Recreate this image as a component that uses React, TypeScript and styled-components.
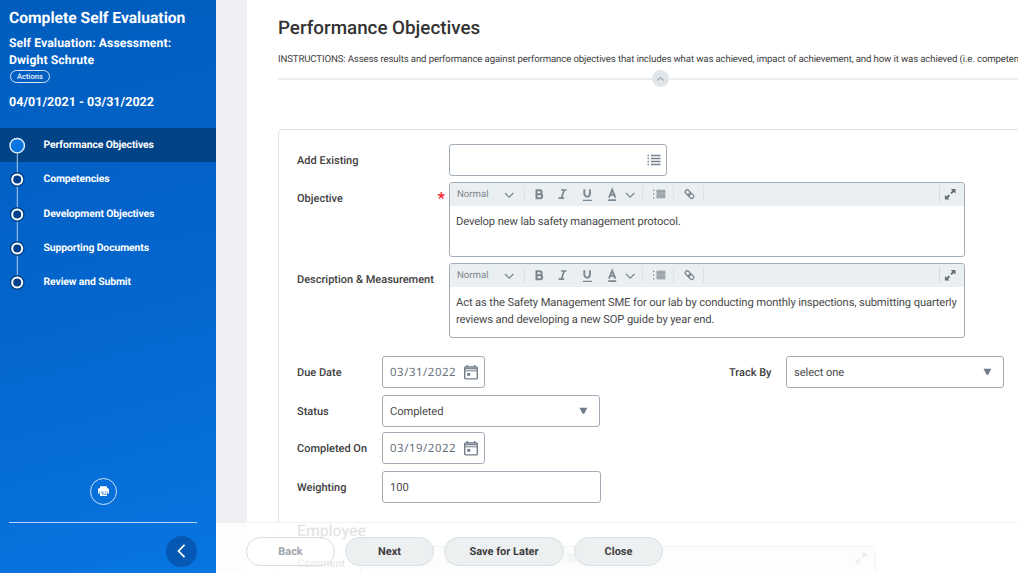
import React from 'react';
import styled, { createGlobalStyle } from 'styled-components';

const GlobalStyle = createGlobalStyle`
  * { box-sizing: border-box; }
  body {
    margin: 0;
    overflow: hidden;
    background: #fff;
    font-family: Roboto, "Liberation Sans", sans-serif;
    color: #4a4a4a;
    text-rendering: geometricPrecision;
  }
  button { font-family: inherit; cursor: pointer; text-rendering: inherit; }
  h1, h2, p { margin: 0; }
`;

const Page = styled.div`
  display: flex;
  width: 1018px;
  height: 573px;
  overflow: hidden;
`;

const Sidebar = styled.aside`
  display: flex;
  flex-direction: column;
  flex: none;
  width: 215.5px;
  height: 573px;
  color: #fff;
  background: linear-gradient(165deg, #005dbd 0%, #0364cb 45%, #0875e1 100%);
`;

const SidebarHead = styled.header`
  height: 128px;
  padding: 8px 0 0 9px;
`;

const SideTitle = styled.h1`
  font-size: 15.65px;
  line-height: 19px;
  font-weight: 700;
  white-space: nowrap;
`;

const SideSubtitle = styled.p`
  margin-top: 8px;
  font-size: 12.2px;
  line-height: 17px;
  font-weight: 700;
  letter-spacing: 0.1px;
`;

const ActionsButton = styled.button`
  display: flex;
  align-items: center;
  justify-content: center;
  width: 40px;
  height: 13px;
  margin: 1px 0 0 1px;
  padding: 0;
  border: 1px solid #d5e5f7;
  border-radius: 7px;
  background: transparent;
  color: #e4eefa;
  font-size: 7.6px;
  line-height: 10px;
  font-weight: 500;
`;

const DateRange = styled.p`
  margin-top: 11px;
  font-size: 12.55px;
  line-height: 18px;
  font-weight: 700;
`;

const Steps = styled.nav`
  display: flex;
  flex-direction: column;
  flex: 1;
`;

const Step = styled.div<{ $active?: boolean }>`
  display: flex;
  align-items: flex-start;
  height: 34.3px;
  padding-left: 7px;
  background: ${(p) => (p.$active ? '#004387' : 'transparent')};
`;

const StepMark = styled.svg`
  flex: none;
  display: block;
  overflow: visible;
`;

const StepLabel = styled.span`
  margin: 9px 0 0 16.5px;
  font-size: 10.4px;
  line-height: 15px;
  font-weight: 700;
  letter-spacing: -0.11px;
  white-space: nowrap;
`;

const SidebarFoot = styled.footer`
  display: flex;
  flex-direction: column;
  align-items: center;
  height: 96px;
  padding-left: 9px;
  padding-right: 18.5px;
`;

const PrintButton = styled.button`
  display: flex;
  align-items: center;
  justify-content: center;
  width: 27px;
  height: 27px;
  margin-top: 0.5px;
  padding: 0;
  border: 1px solid #cfe2f8;
  border-radius: 50%;
  background: transparent;
`;

const FootRule = styled.div`
  width: 100%;
  height: 1px;
  margin-top: 17.5px;
  background: #b4d3f5;
`;

const CollapseButton = styled.button`
  display: flex;
  align-items: center;
  justify-content: center;
  align-self: flex-end;
  flex: none;
  width: 31px;
  height: 31px;
  margin-top: 12.5px;
  padding: 0;
  border: 0;
  border-radius: 50%;
  background: #0559b5;
`;

const Gutter = styled.div`
  flex: none;
  width: 31.5px;
  background: #eeeff2;
`;

const Main = styled.main`
  flex: 1;
  min-width: 0;
  padding-left: 31px;
  background: #fff;
`;

const PageTitle = styled.h2`
  padding-top: 16px;
  font-size: 18.8px;
  line-height: 24px;
  font-weight: 500;
  color: #333;
  white-space: nowrap;
`;

const Instructions = styled.p`
  margin-top: 12px;
  font-size: 9.65px;
  line-height: 15px;
  letter-spacing: -0.13px;
  color: #404040;
  white-space: nowrap;
`;

const Divider = styled.div`
  display: flex;
  align-items: center;
  height: 17px;
  margin-top: 3px;
`;

const DividerLine = styled.div<{ $width?: number }>`
  flex: ${(p) => (p.$width ? 'none' : '1')};
  width: ${(p) => (p.$width ? `${p.$width}px` : 'auto')};
  height: 2px;
  background: #ebeff2;
`;

const FoldButton = styled.button`
  display: flex;
  align-items: center;
  justify-content: center;
  width: 17px;
  height: 17px;
  padding: 0;
  border: 0;
  border-radius: 50%;
  background: #dfe5e8;
`;

const Card = styled.section`
  width: 760px;
  height: 470px;
  margin-top: 42px;
  padding: 14px 0 0 18px;
  border: 1px solid #dfe3e9;
  border-radius: 4px;
`;

const Row = styled.div<{ $gap?: number }>`
  display: flex;
  align-items: flex-start;
  margin-bottom: ${(p) => p.$gap ?? 6}px;
`;

const Label = styled.label<{ $width: number }>`
  flex: none;
  width: ${(p) => p.$width}px;
  padding-top: 9px;
  font-size: 11px;
  line-height: 15px;
  font-weight: 500;
  color: #404040;
  white-space: nowrap;
`;

const TrackLabel = styled(Label)`
  margin-left: 244px;
`;

const Required = styled.span`
  flex: none;
  width: 12px;
  padding-top: 6px;
  margin-left: -11.5px;
  margin-right: -0.5px;
  font-size: 17px;
  line-height: 22px;
  font-weight: 500;
  color: #f5222d;
`;

const Field = styled.div<{ $width: number }>`
  display: flex;
  align-items: center;
  justify-content: space-between;
  flex: none;
  width: ${(p) => p.$width}px;
  height: 32px;
  padding: 0 5px 0 7px;
  border: 1px solid #a3adb8;
  border-radius: 3px;
  background: #fff;
  font-size: 11.2px;
  line-height: 16px;
  letter-spacing: -0.1px;
  color: #4a4a4a;
`;

const FieldText = styled.span`
  padding-top: 2px;
`;

const DateText = styled(FieldText)`
  font-family: "Noto Sans", sans-serif;
  font-size: 11.4px;
  letter-spacing: 0.55px;
  color: #67717c;
`;

const Caret = styled.svg`
  display: block;
  margin-right: 6px;
`;

const Editor = styled.div<{ $height?: number }>`
  flex: none;
  width: 515.5px;
  height: ${(p) => p.$height ?? 75}px;
  border: 1px solid #a3adb8;
  border-radius: 3px;
  overflow: hidden;
  background: #fff;
`;

const Toolbar = styled.div`
  display: flex;
  align-items: center;
  height: 23px;
  background: #eaeff2;
  color: #7e868d;
`;

const FormatName = styled.span`
  width: 48px;
  margin-left: 7px;
  font-size: 9.6px;
  line-height: 14px;
  color: #7d8388;
`;

const ToolIcons = styled.svg`
  display: block;
  flex: none;
  margin-left: -0.9px;
`;

const ExpandIcon = styled.svg`
  display: block;
  margin-left: auto;
`;

const EditorText = styled.p`
  padding: 7px 0 0 6px;
  font-size: 11.2px;
  line-height: 17.2px;
  letter-spacing: -0.125px;
  color: #4a4a4a;
  white-space: pre;
`;

const SectionTitle = styled.h2`
  margin-top: 18px;
  font-size: 15.8px;
  line-height: 20px;
  font-weight: 500;
  color: #333;
`;

const CommentRow = styled(Row)`
  margin-top: 5px;
`;

const CommentLabel = styled(Label)`
  padding-top: 10px;
`;

const FooterBar = styled.footer`
  position: absolute;
  left: 216px;
  top: 522px;
  display: flex;
  gap: 10px;
  width: 802px;
  height: 51px;
  padding: 14px 0 0 30px;
  border-top: 1px solid #f2f2f3;
  background: rgba(255, 255, 255, 0.87);
`;

const PillButton = styled.button<{ $width?: number; $ghost?: boolean }>`
  width: ${(p) => p.$width ?? 89}px;
  height: 29px;
  padding: 0;
  border: 1px solid ${(p) => (p.$ghost ? '#d9dde2' : '#dae0e5')};
  border-radius: 15px;
  background: ${(p) => (p.$ghost ? 'rgba(255,255,255,0.3)' : '#ecf0f1')};
  font-size: 11px;
  font-weight: 700;
  color: ${(p) => (p.$ghost ? '#a0a5aa' : '#3c3c3c')};
`;

const steps = [
  'Performance Objectives',
  'Competencies',
  'Development Objectives',
  'Supporting Documents',
  'Review and Submit',
];

function StepDot({ index }: { index: number }) {
  const last = index === steps.length - 1;
  return (
    <StepMark width="20" height="34.3" viewBox="0 0 20 34.3">
      {!last && <path d="M10.300 17V52" stroke="#b5cfee" strokeWidth="1" />}
      {index === 0 ? (
        <circle cx="10.200" cy="17.700" r="7.200" fill="#0875e1" stroke="#e2ecf7" strokeWidth="1.400" />
      ) : (
        <>
          <circle cx="10.200" cy="17.500" r="7.400" fill="#004387" />
          <circle cx="10.200" cy="17.500" r="5" fill="#00408a" stroke="#fff" strokeWidth="2" />
        </>
      )}
    </StepMark>
  );
}

function Tools() {
  return (
    <Toolbar>
      <FormatName>Normal</FormatName>
      <ToolIcons width="210" height="23" viewBox="0 0 210 23" fill="none" stroke="#7e868d">
        <path d="M1 10l4.200 4.200 4.200-4.200" strokeWidth="1.200" />
        <path d="M20.500 3v16M138.500 3v16M169.500 3v16M199.500 3v16" stroke="#dce2e5" />
        <path d="M32.500 7.300h3.200a1.900 1.900 0 0 1 0 3.900h-3.200zM32.500 11.200h3.700a2 2 0 0 1 0 4h-3.700z" strokeWidth="2" />
        <path d="M57 7h5.500M54.500 15.100H60M60.200 7l-2.700 8.100" strokeWidth="1.700" />
        <path d="M80.300 6.200v4.200a2.800 3.200 0 0 0 5.600 0V6.200" strokeWidth="1.900" />
        <path d="M78.800 17.300h9" strokeWidth="1.300" />
        <path d="M105 14.600l3.200-8 3.200 8M106.200 11.800h4" strokeWidth="1.800" />
        <path d="M104.200 17.100h8" strokeWidth="1.600" />
        <path d="M122 10l4.200 4.200 4.200-4.200" strokeWidth="1.200" />
        <path d="M149 7.300h1.300M149 11.100h1.300M149 14.900h1.300" strokeWidth="1.200" />
        <rect x="152.500" y="6.600" width="8.800" height="8.800" fill="#a4abb1" stroke="none" />
        <path d="M152.500 8.500h8.800M152.500 13.300h8.800" stroke="#959da3" strokeWidth="0.800" />
        <g strokeWidth="1.300" transform="rotate(45 185.500 11.100)">
          <rect x="180.300" y="9.100" width="6" height="4" rx="2" />
          <rect x="184.800" y="9.100" width="6" height="4" rx="2" />
        </g>
      </ToolIcons>
      <ExpandIcon width="26" height="23" viewBox="0 0 26 23" fill="#656d73">
        <path d="M1.500 2.500v17" stroke="#d5dce0" />
        <path d="M12.800 6h4.700v4.700l-1.700-1.600-2.100 2-1.400-1.400 2.100-2zM6.900 16.600v-4.700l1.700 1.600 2.100-2 1.400 1.400-2.100 2 1.600 1.700z" />
      </ExpandIcon>
    </Toolbar>
  );
}

function Calendar() {
  return (
    <svg width="16" height="17" viewBox="0 0 16 17" fill="none" stroke="#727e89">
      <rect x="1.700" y="3" width="12.600" height="11.900" rx="1" strokeWidth="1.400" />
      <path d="M1.500 4.700h13" strokeWidth="1.200" />
      <path d="M1.500 6.800h13" strokeWidth="1" />
      <path d="M4.300 1v2M11.700 1v2" strokeWidth="1.500" />
      <rect x="4.200" y="9" width="3" height="2.800" fill="#727e89" stroke="none" />
    </svg>
  );
}

function DropCaret() {
  return (
    <Caret width="9" height="8" viewBox="0 0 9 8">
      <path d="M0.500 0.800h7.800L5.200 6.800H3.600z" fill="#6f7b86" />
    </Caret>
  );
}

export default function App() {
  return (
    <Page>
      <GlobalStyle />
      <Sidebar>
        <SidebarHead>
          <SideTitle>Complete Self Evaluation</SideTitle>
          <SideSubtitle>
            Self Evaluation: Assessment:
            <br />
            Dwight Schrute
          </SideSubtitle>
          <ActionsButton>Actions</ActionsButton>
          <DateRange>04/01/2021 - 03/31/2022</DateRange>
        </SidebarHead>
        <Steps>
          {steps.map((name, i) => (
            <Step key={name} $active={i === 0}>
              <StepDot index={i} />
              <StepLabel>{name}</StepLabel>
            </Step>
          ))}
        </Steps>
        <SidebarFoot>
          <PrintButton aria-label="Print">
            <svg width="13" height="13" viewBox="0 0 13 13">
              <path d="M3 1.200h7v2H3zM2.300 3.200h8.400q1.300 0 1.300 1.400v4h-1.700V6H2.700v2.600H1v-4q0-1.400 1.300-1.400z" fill="#fff" />
              <path d="M3 6.200h7v4.800H3z" fill="#fff" />
              <path d="M4.200 7.700h2v.9l-.9 1.400M7.300 9.500h1.500V7.300" fill="none" stroke="#0a6bd0" strokeWidth="0.800" />
            </svg>
          </PrintButton>
          <FootRule />
          <CollapseButton aria-label="Collapse">
            <svg width="14" height="16" viewBox="0 0 14 16">
              <path d="M9.500 1.800L3.500 8l6 6.200" fill="none" stroke="#fff" strokeWidth="1.700" />
            </svg>
          </CollapseButton>
        </SidebarFoot>
      </Sidebar>
      <Gutter />
      <Main>
        <PageTitle>Performance Objectives</PageTitle>
        <Instructions>
          INSTRUCTIONS: Assess results and performance against performance objectives that includes what was
          achieved, impact of achievement, and how it was achieved (i.e. competencies)
        </Instructions>
        <Divider>
          <DividerLine $width={374} />
          <FoldButton aria-label="Fold">
            <svg width="9" height="6" viewBox="0 0 9 6">
              <path d="M1.300 4.500l3.200-3 3.200 3" fill="none" stroke="#9fa9b0" strokeWidth="1.100" />
            </svg>
          </FoldButton>
          <DividerLine />
        </Divider>
        <Card>
          <Row>
            <Label $width={152}>Add Existing</Label>
            <Field $width={218}>
              <span />
              <svg width="14" height="12" viewBox="0 0 14 12" stroke="#7a858f" strokeWidth="1.300">
                <path d="M0.500 1.500H2M0.500 4.500H2M0.500 7.500H2M0.500 10.500H2M3.800 1.500h9.700M3.800 4.500h9.700M3.800 7.500h9.700M3.800 10.500h9.700" />
              </svg>
            </Field>
          </Row>
          <Row>
            <Label $width={152}>Objective</Label>
            <Required>*</Required>
            <Editor>
              <Tools />
              <EditorText>Develop new lab safety management protocol.</EditorText>
            </Editor>
          </Row>
          <Row $gap={18}>
            <Label $width={152}>Description &amp; Measurement</Label>
            <Editor>
              <Tools />
              <EditorText>
                {'Act as the Safety Management SME for our lab by conducting monthly inspections, submitting quarterly\nreviews and developing a new SOP guide by year end.'}
              </EditorText>
            </Editor>
          </Row>
          <Row $gap={7}>
            <Label $width={85}>Due Date</Label>
            <Field $width={103}>
              <DateText>03/31/2022</DateText>
              <Calendar />
            </Field>
            <TrackLabel $width={57}>Track By</TrackLabel>
            <Field $width={218}>
              <FieldText>select one</FieldText>
              <DropCaret />
            </Field>
          </Row>
          <Row $gap={5}>
            <Label $width={85}>Status</Label>
            <Field $width={218}>
              <FieldText>Completed</FieldText>
              <DropCaret />
            </Field>
          </Row>
          <Row $gap={7}>
            <Label $width={85}>Completed On</Label>
            <Field $width={103}>
              <DateText>03/19/2022</DateText>
              <Calendar />
            </Field>
          </Row>
          <Row>
            <Label $width={85}>Weighting</Label>
            <Field $width={219}>
              <FieldText>100</FieldText>
            </Field>
          </Row>
          <SectionTitle>Employee</SectionTitle>
          <CommentRow>
            <CommentLabel $width={63}>Comment</CommentLabel>
            <Editor>
              <Tools />
            </Editor>
          </CommentRow>
        </Card>
      </Main>
      <FooterBar>
        <PillButton $ghost>Back</PillButton>
        <PillButton>Next</PillButton>
        <PillButton $width={120}>Save for Later</PillButton>
        <PillButton>Close</PillButton>
      </FooterBar>
    </Page>
  );
}
